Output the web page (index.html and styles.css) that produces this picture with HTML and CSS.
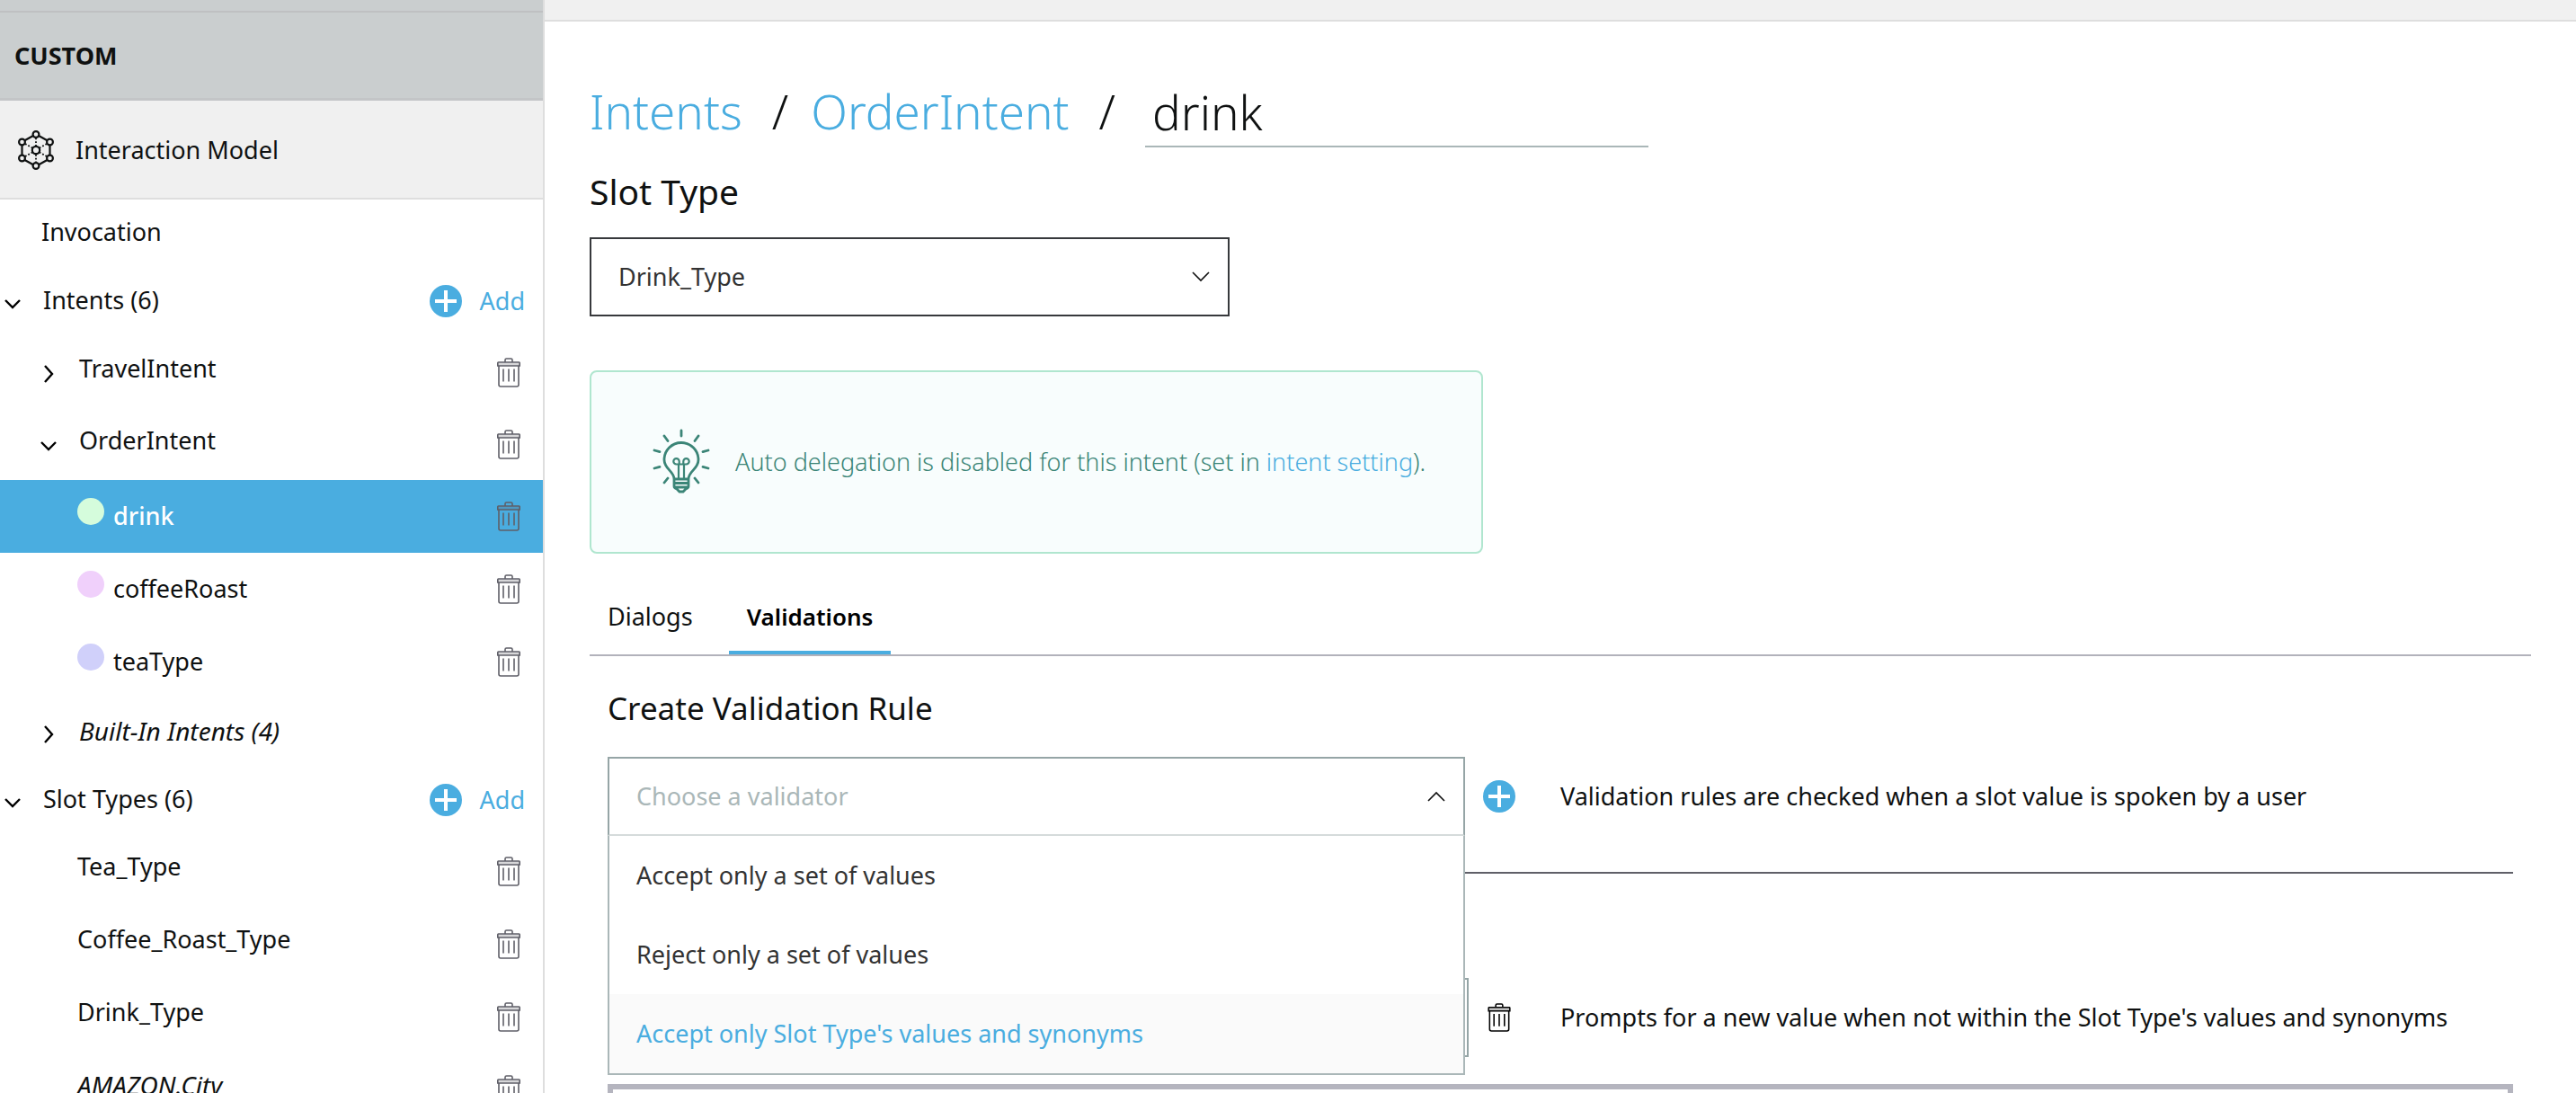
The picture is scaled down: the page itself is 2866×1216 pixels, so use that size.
FILE: index.html
```
<!DOCTYPE html>
<html lang="en">
<head>
<meta charset="utf-8">
<meta name="viewport" content="width=device-width, initial-scale=1">
<title>Slot: drink</title>
<link rel="stylesheet" href="styles.css">
</head>
<body>
<svg class="sprite" aria-hidden="true">
  <symbol id="trash" viewBox="0 0 26 33">
    <path d="M1 5.500h24v3.500H1z" fill="currentColor" fill-opacity=".25"/>
    <path d="M9 5V2.500q0-1.500 1.500-1.500h5q1.500 0 1.500 1.500V5M1.500 5h23q.700 0 .700.700V9H.800V5.700q0-.700.700-.700zM2 9.500V30q0 2 2 2h18q2 0 2-2V9.500M7 12.500v14M13 12.500v14M19 12.500v14" fill="none" stroke="currentColor" stroke-width="1.600"/>
  </symbol>
  <symbol id="plus" viewBox="0 0 36 36">
    <circle cx="18" cy="18" r="18" fill="#4aade0"/>
    <path d="M18 6v24M6 18h24" stroke="#fff" stroke-width="4"/>
  </symbol>
  <symbol id="down" viewBox="0 0 18 12">
    <path d="M1 2l8 8 8-8" fill="none" stroke="currentColor" stroke-width="2.400"/>
  </symbol>
  <symbol id="right" viewBox="0 0 18 20">
    <path d="M5 1l8 9-8 9" fill="none" stroke="currentColor" stroke-width="2.400"/>
  </symbol>
  <symbol id="thin-down" viewBox="0 0 20 12">
    <path d="M1 1l9 9 9-9" fill="none" stroke="currentColor" stroke-width="1.600"/>
  </symbol>
  <symbol id="thin-up" viewBox="0 0 20 12">
    <path d="M1 11l9-9 9 9" fill="none" stroke="currentColor" stroke-width="1.600"/>
  </symbol>
</svg>
<div class="shell">
  <aside class="sidebar">
    <div class="strip"></div>
    <h2 class="section">CUSTOM</h2>
    <a class="model" href="#model">
      <svg class="model-icon" viewBox="0 0 40 44" fill="none" stroke="currentColor" stroke-width="2.200" aria-hidden="true">
        <path d="M16.500 6.200L7.500 11.200M23.500 6.200l9 5M4.500 17v10M35.500 17v10M7.500 33l9 5M32.500 33l-9 5"/>
        <path d="M20 8.500V17M20 27v8.500M8 15l8 4.500M32 15l-8 4.500M8 29l8-4.500M32 29l-8-4.500" stroke-width="1.800" stroke-dasharray="1.800 2"/>
        <circle cx="20" cy="4.500" r="3.400"/><circle cx="20" cy="39.500" r="3.400"/>
        <circle cx="4.500" cy="13" r="3.400"/><circle cx="35.500" cy="13" r="3.400"/>
        <circle cx="4.500" cy="31" r="3.400"/><circle cx="35.500" cy="31" r="3.400"/>
        <circle cx="20" cy="22" r="4.200"/>
      </svg>
      Interaction Model
    </a>
    <ul class="tree">
      <li class="row group plain"><a href="#invocation">Invocation</a></li>
      <li class="row group"><svg class="chev"><use href="#down"/></svg><a href="#intents">Intents (6)</a><button class="add" type="button"><svg class="plus"><use href="#plus"/></svg>Add</button></li>
      <li class="row intent"><svg class="chev tall"><use href="#right"/></svg><a href="#travel">TravelIntent</a><button class="del" type="button" aria-label="Delete TravelIntent"><svg><use href="#trash"/></svg></button></li>
      <li class="row intent"><svg class="chev"><use href="#down"/></svg><a href="#order">OrderIntent</a><button class="del" type="button" aria-label="Delete OrderIntent"><svg><use href="#trash"/></svg></button></li>
      <li class="row slot selected"><span class="dot green"></span><a href="#drink">drink</a><button class="del" type="button" aria-label="Delete drink"><svg><use href="#trash"/></svg></button></li>
      <li class="row slot"><span class="dot pink"></span><a href="#coffee">coffeeRoast</a><button class="del" type="button" aria-label="Delete coffeeRoast"><svg><use href="#trash"/></svg></button></li>
      <li class="row slot"><span class="dot violet"></span><a href="#tea">teaType</a><button class="del" type="button" aria-label="Delete teaType"><svg><use href="#trash"/></svg></button></li>
      <li class="row group nested"><svg class="chev tall"><use href="#right"/></svg><a class="builtin" href="#builtin">Built-In Intents (4)</a></li>
      <li class="row group"><svg class="chev"><use href="#down"/></svg><a href="#types">Slot Types (6)</a><button class="add" type="button"><svg class="plus"><use href="#plus"/></svg>Add</button></li>
      <li class="row type"><a href="#tea-type">Tea_Type</a><button class="del" type="button" aria-label="Delete Tea_Type"><svg><use href="#trash"/></svg></button></li>
      <li class="row type"><a href="#coffee-type">Coffee_Roast_Type</a><button class="del" type="button" aria-label="Delete Coffee_Roast_Type"><svg><use href="#trash"/></svg></button></li>
      <li class="row type"><a href="#drink-type">Drink_Type</a><button class="del" type="button" aria-label="Delete Drink_Type"><svg><use href="#trash"/></svg></button></li>
      <li class="row type"><a class="builtin" href="#city">AMAZON.City</a><button class="del" type="button" aria-label="Delete AMAZON.City"><svg><use href="#trash"/></svg></button></li>
    </ul>
  </aside>
  <main class="main">
    <div class="topbar"></div>
    <div class="content">
      <nav class="crumbs" aria-label="Breadcrumb">
        <a href="#intents">Intents</a><span class="slash">/</span><a href="#order">OrderIntent</a><span class="slash">/</span>
        <input type="text" value="drink" aria-label="Slot name">
      </nav>
      <label class="field-label" for="slot-type">Slot Type</label>
      <div class="select type-select">
        <select id="slot-type"><option>Drink_Type</option></select>
        <svg class="caret"><use href="#thin-down"/></svg>
      </div>
      <div class="notice">
        <svg class="bulb" viewBox="0 0 64 74" fill="none" stroke="currentColor" stroke-width="2.800" stroke-linecap="round" aria-hidden="true">
          <path d="M32 2v6M13 8l4 5.500M51 8l-4 5.500M2 24l6 1.600M62 24l-6 1.600M2 44l6-1.600M62 44l-6-1.600M13 60l4-5M51 60l-4-5"/>
          <path d="M24 56C24 47 13 45 13 34.500a19 19 0 0 1 38 0C51 45 40 47 40 56zM24 56v8q0 2 3 3l3 3h4l3-3q3-1 3-3v-8M24 60.500h16M25 65h14"/>
          <path d="M29 55V39.500h-2.500a3.200 3.200 0 1 1 3.200-3.200V39.500h4.600v-3.200a3.200 3.200 0 1 1 3.200 3.200H35V55" stroke-width="2.200"/>
        </svg>
        <p>Auto delegation is disabled for this intent (set in <a href="#setting">intent setting</a>).</p>
      </div>
      <div class="tabs" role="tablist">
        <button type="button" role="tab" aria-selected="false">Dialogs</button>
        <button type="button" role="tab" aria-selected="true">Validations</button>
      </div>
      <section class="panel">
        <h3>Create Validation Rule</h3>
        <div class="rule">
          <div class="select validator">
            <select aria-label="Validator"><option>Choose a validator</option></select>
            <svg class="caret"><use href="#thin-up"/></svg>
            <ul class="options" role="listbox" aria-label="Validators">
              <li role="option">Accept only a set of values</li>
              <li role="option">Reject only a set of values</li>
              <li role="option" class="active" aria-selected="true">Accept only Slot Type's values and synonyms</li>
            </ul>
          </div>
          <button class="icon-button" type="button" aria-label="Add rule"><svg class="plus"><use href="#plus"/></svg></button>
          <p>Validation rules are checked when a slot value is spoken by a user</p>
        </div>
        <hr>
        <div class="rule">
          <div class="rule-value"></div>
          <button class="icon-button" type="button" aria-label="Delete rule"><svg class="rule-trash"><use href="#trash"/></svg></button>
          <p>Prompts for a new value when not within the Slot Type's values and synonyms</p>
        </div>
        <div class="prompts"></div>
      </section>
    </div>
  </main>
</div>
</body>
</html>
```
FILE: styles.css
```
* { box-sizing: border-box; }
body {
  margin: 0;
  color: #0f1111;
  background: #fff;
  font: 450 27px/40px "Noto Sans", "Open Sans", sans-serif;
}
a { color: inherit; text-decoration: none; }
ul, h2, h3, p { margin: 0; padding: 0; font-size: inherit; font-weight: inherit; }
ul { list-style: none; }
button, input, select { font: inherit; color: inherit; }
button { padding: 0; border: 0; background: none; }
svg { display: block; flex: none; }
.sprite { position: absolute; width: 0; height: 0; }

.shell { display: flex; height: 100vh; overflow: hidden; }

/* Sidebar */
.sidebar { flex: none; width: 606px; border-right: 2px solid #dedede; overflow: hidden; }
.strip { height: 14px; background: #cacecf; border-bottom: 2px solid #bfc0c2; }
.section {
  height: 98px;
  padding: 28px 16px;
  background: #cacecf;
  border-bottom: 3px solid #c3c5c7;
  font-weight: 700;
}
.model {
  display: flex;
  align-items: center;
  gap: 24px;
  height: 110px;
  padding: 2px 0 0 20px;
  background: #f0f0f0;
  border-bottom: 2px solid #dedede;
}
.model-icon { width: 40px; height: 44px; }

.row { display: flex; align-items: center; height: 81px; gap: 25px; padding-right: 25px; }
.row a { flex: 1; padding-bottom: 4px; }
.group { height: 76px; padding-left: 5px; padding-right: 20px; }
.plain { padding-left: 46px; }
.intent { height: 80px; }
.intent a { padding-bottom: 8px; }
.intent, .nested { padding-left: 45px; }
.slot { padding-left: 86px; gap: 10px; }
.slot a { padding-bottom: 2px; }
.type { padding-left: 86px; }
.type a { padding-bottom: 12px; }
.row .builtin { font-size: 28px; font-style: italic; }
.chev { width: 18px; height: 12px; margin-top: 4px; color: #000; }
.chev.tall { height: 20px; }
.dot { width: 30px; height: 30px; margin-bottom: 12px; border-radius: 50%; }
.green { background: #d5fcdc; }
.pink { background: #f0d0fb; }
.violet { background: #d0d0fa; }
.selected { background: #4aade0; }
.selected a { color: #fff; font-weight: 500; }
.add { display: flex; align-items: center; gap: 20px; padding-bottom: 2px; color: #4aade0; }
.plus { width: 36px; height: 36px; }
.del { color: #5f5f68; }
.del svg { width: 26px; height: 33px; }

/* Main pane */
.main { flex: 1; min-width: 0; overflow: hidden; }
.topbar { height: 24px; background: #f0f0f0; border-bottom: 2px solid #dedede; }
.content { padding: 62px 50px 0; }
.crumbs { display: flex; font-size: 53px; font-weight: 300; line-height: 76px; }
.crumbs a { color: #4aade0; }
.slash { padding: 0 25px 0 33px; }
.crumbs input {
  width: 560px;
  height: 78px;
  margin-left: 8px;
  padding: 0 8px;
  border: 0;
  border-bottom: 2px solid #aab7b8;
  background: none;
}
.field-label { display: block; margin: 23px 0 25px; font-size: 39px; line-height: 52px; }

.select { position: relative; height: 88px; color: #333; }
.select select {
  appearance: none;
  width: 100%;
  height: 100%;
  padding: 0 30px;
  border: 2px solid #37393c;
  border-radius: 0;
  background: #fff;
}
.type-select { width: 712px; }
.caret {
  position: absolute;
  top: 38px;
  right: 22px;
  width: 20px;
  height: 12px;
  color: #111;
  pointer-events: none;
}

.notice {
  display: flex;
  align-items: center;
  gap: 28px;
  width: 994px;
  height: 204px;
  margin-top: 60px;
  padding-left: 68px;
  border: 2px solid #b0e6cf;
  border-radius: 8px;
  background: #f8fdfd;
  color: #3b8577;
}
.notice p { font-size: 27px; font-weight: 300; }
.notice a { color: #4aade0; }
.bulb { width: 64px; height: 74px; }

.tabs { display: flex; gap: 20px; margin-top: 50px; border-bottom: 2px solid #b2b2bb; }
.tabs button { padding: 0 20px 18px; border-bottom: 4px solid transparent; }
.tabs button[aria-selected="true"] { border-color: #4aade0; color: #000; font-size: 26px; font-weight: 600; }

.panel { padding: 34px 20px 0; }
.panel h3 { margin-bottom: 30px; font-size: 35px; line-height: 48px; }
.rule {
  display: grid;
  grid-template-columns: minmax(0, 958px) 68px 1fr;
  align-items: center;
}
.rule p { padding-left: 34px; }
.icon-button { display: grid; place-items: center; color: #000; }
.rule-trash { width: 26px; height: 32px; }
.validator { margin-right: 4px; }
.validator select { border-color: #95a5a6; border-bottom-color: #d5dbdb; color: #aab7b8; }
.options {
  position: absolute;
  z-index: 1;
  top: 88px;
  left: 0;
  right: 0;
  border: 2px solid #aab7b8;
  border-top: 0;
  background: #fff;
}
.options li { padding: 24px 30px; }
.options .active { background: #fafafa; color: #4aade0; }
hr { height: 2px; margin: 40px 0 116px; border: 0; background: #5f5f68; }
.rule-value { height: 88px; border: 2px solid #95a5a6; }
.prompts { height: 200px; margin-top: 30px; border: 6px solid #b5b5bf; }
```
